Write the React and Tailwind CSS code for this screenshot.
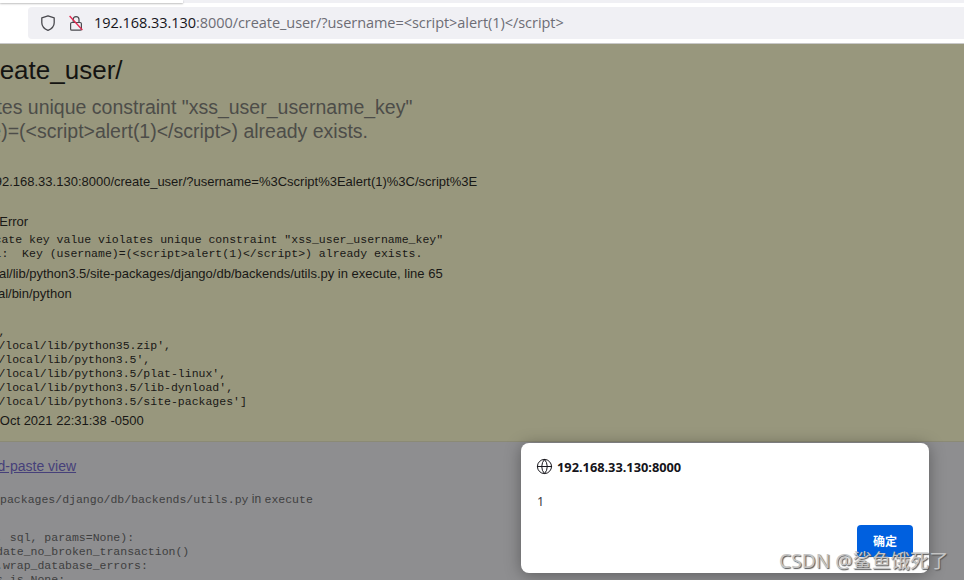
import { Globe } from "lucide-react";

const sans = "font-['Liberation_Sans',Arial,sans-serif]";
const mono = "font-['Liberation_Mono','Courier_New',monospace]";

function InsecureLock() {
  return (
    <svg viewBox="0 0 14 16" className="h-4 w-[14px]" fill="none">
      <path d="M4.2 7.5V4.6a2.9 2.9 0 0 1 5.8 0v2.9" stroke="#4a4a4f" strokeWidth="1.2" />
      <rect x="1.6" y="7.5" width="10.8" height="7.7" rx="1.3" stroke="#4a4a4f" strokeWidth="1.2" />
      <path d="M0.6 1 13.4 15" stroke="#e22850" strokeWidth="1.3" />
    </svg>
  );
}

function ShieldIcon() {
  return (
    <svg viewBox="0 0 14 16" className="h-4 w-[14px]" fill="none">
      <path
        d="M7 0.8 13.2 2.8v4.9c0 3.5-2.4 6-6.2 7.6C3.2 13.7 0.8 11.2 0.8 7.7V2.8L7 0.8Z"
        stroke="#4a4a4f"
        strokeWidth="1.3"
        strokeLinejoin="round"
      />
    </svg>
  );
}

function BrowserBar() {
  return (
    <div className="h-11 shrink-0 border-b border-[#c9c9c9] bg-white">
      <div className="flex h-[3px] bg-[#f0f0f4]">
        <div className="w-[183px] bg-white shadow-[0_1px_2px_rgba(0,0,0,0.25)]" />
      </div>
      <div className="ml-7 mt-1 flex h-8 items-center rounded-l bg-[#f0f0f4] pl-[13px]">
        <ShieldIcon />
        <div className="ml-[14px]">
          <InsecureLock />
        </div>
        <p className="ml-[11px] font-['Open_Sans',sans-serif] text-[14.5px] tracking-[-0.05px] whitespace-nowrap text-[#6d6d75]">
          <span className="text-[#15141a]">192.168.33.130</span>:8000/create_user/?username=&lt;script&gt;alert(1)&lt;/script&gt;
        </p>
      </div>
    </div>
  );
}

function SummaryPanel() {
  return (
    <section className={`h-[398px] shrink-0 overflow-hidden border-b border-[#8b8a75] bg-[#98977d] ${sans}`}>
      <h1 className="ml-[-22px] mt-[10px] text-[26px] leading-[32px] whitespace-nowrap text-[#141412]">
        create_user/
      </h1>
      <h2 className="ml-[-215px] mt-[9px] text-[19.5px] leading-6 whitespace-nowrap text-[#4d4d49]">
        <span className="block">duplicate key value violates unique constraint "xss_user_username_key"</span>
        <span className="ml-[123px] block">(username)=(&lt;script&gt;alert(1)&lt;/script&gt;) already exists.</span>
      </h2>
      <div className="ml-[-45px] mt-[31px] text-[13px] whitespace-nowrap text-[#181816]">
        <p className="leading-4">http://192.168.33.130:8000/create_user/?username=%3Cscript%3Ealert(1)%3C/script%3E</p>
        <p className="ml-[-2px] mt-[24px] leading-4">IntegrityError</p>
        <pre className={`ml-[5px] mt-[3px] text-[11.5px] leading-[14px] ${mono}`}>
          {'duplicate key value violates unique constraint "xss_user_username_key"\nDETAIL:  Key (username)=(<script>alert(1)</script>) already exists.'}
        </pre>
        <p className="ml-[2px] mt-[5px] leading-4">/usr/local/lib/python3.5/site-packages/django/db/backends/utils.py in execute, line 65</p>
        <p className="ml-px mt-[4px] leading-4">/usr/local/bin/python</p>
        <pre className={`ml-[2px] mt-[23px] text-[11.5px] leading-[14px] ${mono}`}>
          {"['/ab',\n '/usr/local/lib/python35.zip',\n '/usr/local/lib/python3.5',\n '/usr/local/lib/python3.5/plat-linux',\n '/usr/local/lib/python3.5/lib-dynload',\n '/usr/local/lib/python3.5/site-packages']"}
        </pre>
        <p className="mt-[4px] leading-4">Sat, 23 Oct 2021 22:31:38 -0500</p>
      </div>
    </section>
  );
}

function TracebackPanel() {
  return (
    <section className={`min-h-0 flex-1 overflow-hidden bg-[#8e8e90] ${sans}`}>
      <a className="ml-[-113px] mt-[15px] block text-[14px] leading-[18px] whitespace-nowrap text-[#46407a] underline">
        Switch to copy-and-paste view
      </a>
      <p className="ml-[-207px] mt-[16px] text-[12px] leading-4 whitespace-nowrap text-[#3f3f40]">
        <code className={`text-[11.5px] ${mono}`}>/usr/local/lib/python3.5/site-packages/django/db/backends/utils.py</code>{" "}
        in <code className={`text-[11.5px] ${mono}`}>execute</code>
      </p>
      <pre className={`ml-[-142px] mt-[23px] text-[11.5px] leading-[14px] text-[#3f3f40] ${mono}`}>
        {"    def execute(self, sql, params=None):\n        self.db.validate_no_broken_transaction()\n        with self.db.wrap_database_errors:\n            if params is None:"}
      </pre>
    </section>
  );
}

function AlertDialog() {
  return (
    <div className="absolute left-[521px] top-[443px] flex h-[130px] w-[408px] flex-col rounded-lg bg-white px-4 pt-[15px] pb-4 font-['Noto_Sans','Open_Sans',sans-serif] shadow-[0_2px_16px_rgba(0,0,0,0.35)]">
      <div className="flex items-center gap-[3px]">
        <Globe className="h-[17px] w-[17px] -translate-x-px text-[#15141a]" strokeWidth={1.4} />
        <span className="text-[12.8px] leading-4 font-bold text-[#15141a]">192.168.33.130:8000</span>
      </div>
      <p className="mt-[19px] text-[12.5px] leading-4 text-[#3a3a3f]">1</p>
      <div className="mt-auto flex justify-end">
        <button className="flex h-8 w-14 items-center justify-center rounded bg-[#0060df] font-['Noto_Sans_CJK_SC',sans-serif] text-[12px] font-bold text-white">
          确定
        </button>
      </div>
    </div>
  );
}

export default function App() {
  return (
    <div className="relative flex h-[580px] w-[964px] flex-col overflow-hidden bg-[#8e8e90]">
      <BrowserBar />
      <SummaryPanel />
      <TracebackPanel />
      <AlertDialog />
      <span className="absolute left-[779px] top-[549px] font-['Noto_Sans','Noto_Sans_CJK_SC',sans-serif] text-[19.2px] leading-6 whitespace-nowrap text-[#c4c4c4] [text-shadow:1px_1px_1px_#555]">
        CSDN @鲨鱼饿死了
      </span>
    </div>
  );
}
